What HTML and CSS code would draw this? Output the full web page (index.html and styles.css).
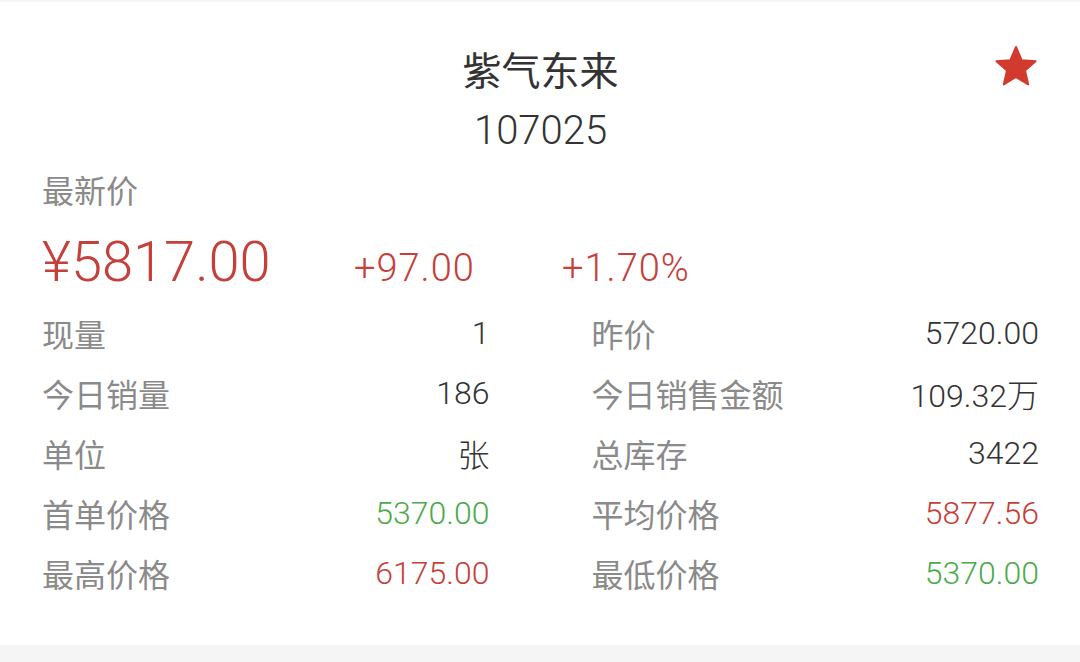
FILE: index.html
```html
<!DOCTYPE html>
<html lang="zh-CN">
<head>
    <meta charset="UTF-8">
    <meta name="viewport" content="width=device-width, initial-scale=1.0">
    <title>紫气东来 107025</title>
    <link rel="stylesheet" href="styles.css">
</head>
<body>
    <div class="card">
        <div class="header">
            <h1 class="title">紫气东来</h1>
            <p class="code">107025</p>
            <svg class="star" viewBox="0 0 44 44" width="44" height="44">
                <polygon points="22,2 27.6,15.2 41.6,16.3 31,25.6 34.2,39.4 22,32 9.8,39.4 13,25.6 2.4,16.3 16.4,15.2" fill="#d33a2e" stroke="#d33a2e" stroke-width="2" stroke-linejoin="round"/>
            </svg>
        </div>

        <div class="label latest">最新价</div>
        <div class="price-row">
            <span class="price">¥5817.00</span>
            <span class="change">+97.00</span>
            <span class="pct">+1.70%</span>
        </div>

        <div class="stats">
            <div class="row"><span class="label">现量</span><span class="value">1</span></div>
            <div class="row"><span class="label">昨价</span><span class="value">5720.00</span></div>
            <div class="row"><span class="label">今日销量</span><span class="value">186</span></div>
            <div class="row"><span class="label">今日销售金额</span><span class="value">109.32万</span></div>
            <div class="row"><span class="label">单位</span><span class="value">张</span></div>
            <div class="row"><span class="label">总库存</span><span class="value">3422</span></div>
            <div class="row"><span class="label">首单价格</span><span class="value down">5370.00</span></div>
            <div class="row"><span class="label">平均价格</span><span class="value up">5877.56</span></div>
            <div class="row"><span class="label">最高价格</span><span class="value up">6175.00</span></div>
            <div class="row"><span class="label">最低价格</span><span class="value down">5370.00</span></div>
        </div>
    </div>
</body>
</html>
```

FILE: styles.css
```css
body {
    margin: 0;
    padding-top: 2px;
    background-color: #f5f5f5;
    font-family: Roboto, "Noto Sans CJK SC", sans-serif;
    color: #333;
}
.card {
    background-color: #fff;
    padding: 48px 41px 42px 42px;
}
.header {
    position: relative;
    text-align: center;
}
.title {
    margin: 0;
    font-size: 39px;
    line-height: 44px;
    font-weight: 400;
    color: #333;
}
.code {
    margin: 14px 0 0;
    font-size: 40px;
    line-height: 46px;
    font-weight: 300;
    color: #333;
}
.star {
    position: absolute;
    top: -5px;
    right: 1px;
}
.label {
    color: #8a8a8a;
    font-size: 32px;
}
.latest {
    margin-top: 18px;
    line-height: 40px;
}
.price-row {
    display: flex;
    align-items: baseline;
    margin-top: 15px;
    height: 70px;
    line-height: 70px;
    font-weight: 300;
    color: #c5403a;
}
.price {
    width: 312px;
    font-size: 56px;
}
.change {
    width: 208px;
    font-size: 38px;
    letter-spacing: 1px;
}
.pct {
    font-size: 38px;
    letter-spacing: 1px;
}
.stats {
    display: grid;
    grid-template-columns: 1fr 1fr;
    column-gap: 102px;
    margin-top: 6px;
}
.row {
    display: flex;
    justify-content: space-between;
    align-items: center;
    height: 60px;
    font-size: 32px;
}
.value {
    font-weight: 300;
    color: #333;
}
.value.up {
    color: #c5403a;
}
.value.down {
    color: #4caa4c;
}
```
